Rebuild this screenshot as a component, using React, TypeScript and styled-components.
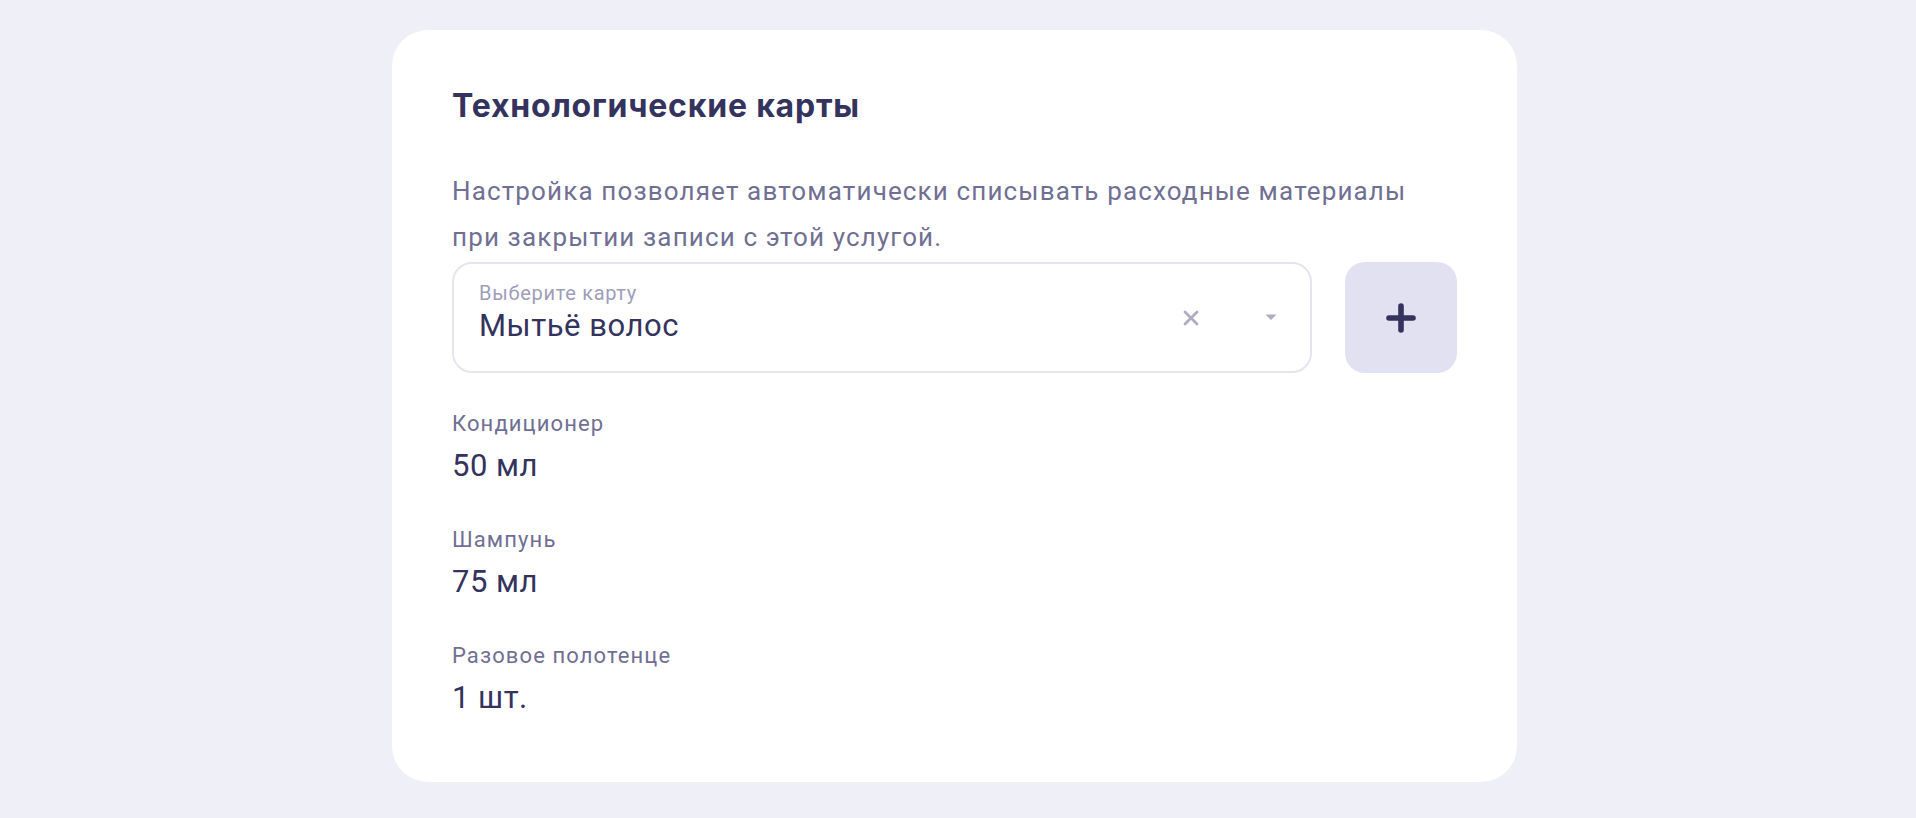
import * as React from 'react';
import styled, { createGlobalStyle } from 'styled-components';

const GlobalStyle = createGlobalStyle`
    html, body {
        margin: 0;
        padding: 0;
        background: #efeff8;
    }

    body {
        font-family: 'Roboto', 'Liberation Sans', sans-serif;
        -webkit-font-smoothing: antialiased;
    }
`;

const Page = styled.div`
    padding: 30px 0 36px 392px;
    min-height: 818px;
    box-sizing: border-box;
`;

const Card = styled.div`
    width: 1125px;
    box-sizing: border-box;
    padding: 57px 60px 66px;
    background: #fff;
    border-radius: 36px;
`;

const Title = styled.h2`
    margin: 0 0 43px;
    font-family: 'Inter', 'Noto Sans', sans-serif;
    font-weight: 700;
    font-size: 32px;
    line-height: 38px;
    color: #34335e;
    letter-spacing: 0.8px;
`;

const Description = styled.p`
    margin: 0 0 2px;
    font-size: 26px;
    line-height: 46px;
    letter-spacing: 1.14px;
    color: #706f93;
`;

const SelectRow = styled.div`
    display: flex;
    align-items: stretch;
    gap: 33px;
    margin-bottom: 38px;
`;

const Select = styled.div`
    flex: 1;
    height: 111px;
    box-sizing: border-box;
    display: flex;
    align-items: flex-start;
    padding: 17px 33px 0 25px;
    border: 2px solid #e6e5ef;
    border-radius: 20px;
`;

const SelectValue = styled.div`
    flex: 1;
    display: flex;
    flex-direction: column;
    gap: 3px;
`;

const SelectLabel = styled.span`
    font-size: 20px;
    line-height: 24px;
    letter-spacing: 0.7px;
    color: #9e9dba;
`;

const SelectText = styled.span`
    font-size: 31px;
    line-height: 36px;
    letter-spacing: 0.55px;
    color: #34335e;
`;

const SelectIcons = styled.div`
    display: flex;
    align-items: center;
    align-self: center;
    margin-top: -17px;
    gap: 65px;
`;

const IconButton = styled.button`
    display: flex;
    align-items: center;
    justify-content: center;
    padding: 0;
    border: 0;
    background: none;
    cursor: pointer;
`;

const AddButton = styled.button`
    width: 112px;
    height: 111px;
    flex: none;
    display: flex;
    align-items: center;
    justify-content: center;
    padding: 0;
    border: 0;
    border-radius: 20px;
    background: #e2e1f1;
    cursor: pointer;
`;

const Items = styled.div`
    display: flex;
    flex-direction: column;
    gap: 43px;
`;

const Item = styled.div`
    display: flex;
    flex-direction: column;
    gap: 11px;
`;

const ItemName = styled.span`
    font-size: 22px;
    line-height: 26px;
    letter-spacing: 1.1px;
    color: #706f93;
`;

const ItemAmount = styled.span`
    font-size: 31px;
    line-height: 36px;
    letter-spacing: 0.5px;
    color: #34335e;
`;

interface Material {
    name: string;
    amount: string;
}

const materials: Material[] = [
    { name: 'Кондиционер', amount: '50 мл' },
    { name: 'Шампунь', amount: '75 мл' },
    { name: 'Разовое полотенце', amount: '1 шт.' }
];

const ClearIcon = () => (
    <svg width="18" height="18" viewBox="0 0 18 18" fill="none">
        <path d="M3 3L15 15M15 3L3 15" stroke="#adacc3" strokeWidth="2.8" strokeLinecap="round" />
    </svg>
);

const CaretIcon = () => (
    <svg width="12" height="7" viewBox="0 0 12 7" fill="none">
        <path d="M0.5 0.5H11.5L6 6Z" fill="#adacc3" />
    </svg>
);

const PlusIcon = () => (
    <svg width="32" height="32" viewBox="0 0 32 32" fill="none">
        <path d="M16 4V28M4 16H28" stroke="#34335e" strokeWidth="5.6" strokeLinecap="round" />
    </svg>
);

export default function App() {
    return (
        <Page>
            <GlobalStyle />
            <Card>
                <Title>Технологические карты</Title>
                <Description>
                    Настройка позволяет автоматически списывать расходные материалы<br />
                    при закрытии записи с этой услугой.
                </Description>
                <SelectRow>
                    <Select>
                        <SelectValue>
                            <SelectLabel>Выберите карту</SelectLabel>
                            <SelectText>Мытьё волос</SelectText>
                        </SelectValue>
                        <SelectIcons>
                            <IconButton><ClearIcon /></IconButton>
                            <IconButton><CaretIcon /></IconButton>
                        </SelectIcons>
                    </Select>
                    <AddButton><PlusIcon /></AddButton>
                </SelectRow>
                <Items>
                    {materials.map(item =>
                        <Item key={item.name}>
                            <ItemName>{item.name}</ItemName>
                            <ItemAmount>{item.amount}</ItemAmount>
                        </Item>)}
                </Items>
            </Card>
        </Page>
    );
}
